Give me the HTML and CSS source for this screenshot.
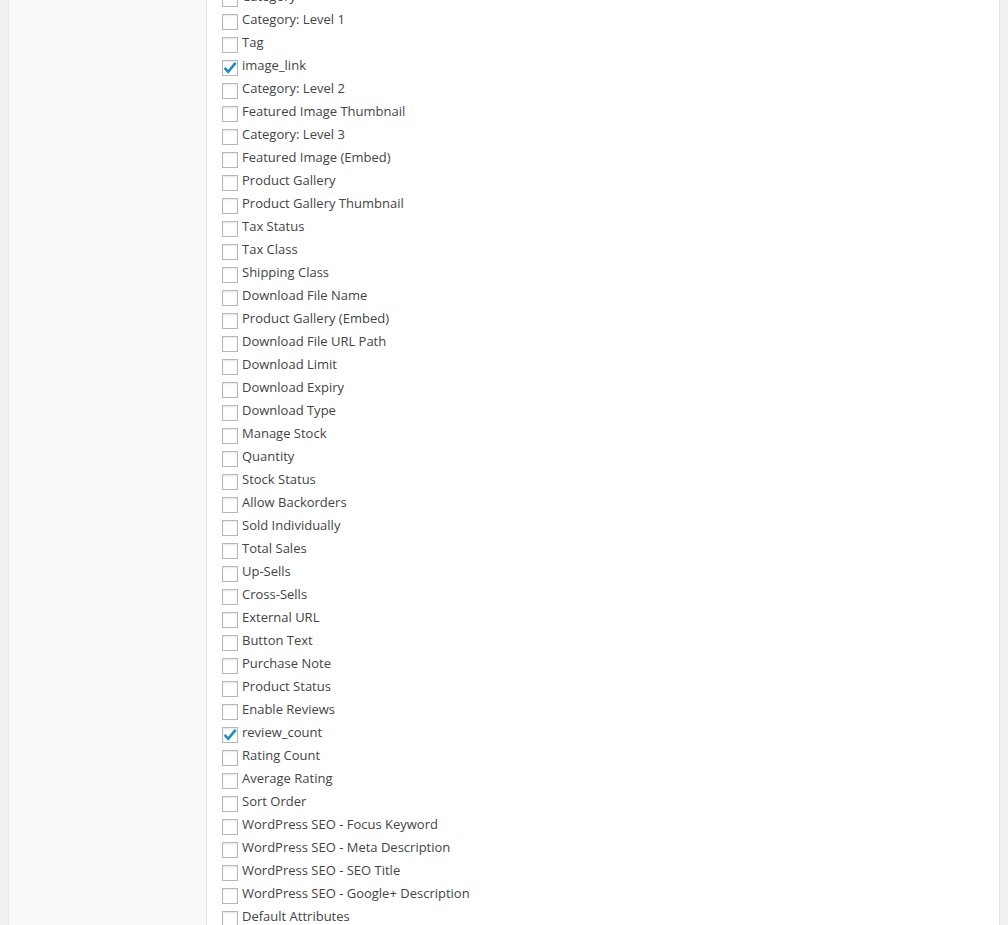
FILE: index.html
```html
<!DOCTYPE html>
<html lang="en">
<head>
    <meta charset="UTF-8">
    <title>Export Fields</title>
    <link rel="stylesheet" href="styles.css">
</head>
<body>
    <div class="wrap">
        <div class="sidebar"></div>
        <div class="main">
            <ul class="fields">
                <li><span class="box"></span>Category</li>
                <li><span class="box"></span>Category: Level 1</li>
                <li><span class="box"></span>Tag</li>
                <li><span class="box checked"><svg viewBox="0 0 14 14"><path d="M1.6 6.8 L5.2 10.8 L12.6 1.8"/></svg></span>image_link</li>
                <li><span class="box"></span>Category: Level 2</li>
                <li><span class="box"></span>Featured Image Thumbnail</li>
                <li><span class="box"></span>Category: Level 3</li>
                <li><span class="box"></span>Featured Image (Embed)</li>
                <li><span class="box"></span>Product Gallery</li>
                <li><span class="box"></span>Product Gallery Thumbnail</li>
                <li><span class="box"></span>Tax Status</li>
                <li><span class="box"></span>Tax Class</li>
                <li><span class="box"></span>Shipping Class</li>
                <li><span class="box"></span>Download File Name</li>
                <li><span class="box"></span>Product Gallery (Embed)</li>
                <li><span class="box"></span>Download File URL Path</li>
                <li><span class="box"></span>Download Limit</li>
                <li><span class="box"></span>Download Expiry</li>
                <li><span class="box"></span>Download Type</li>
                <li><span class="box"></span>Manage Stock</li>
                <li><span class="box"></span>Quantity</li>
                <li><span class="box"></span>Stock Status</li>
                <li><span class="box"></span>Allow Backorders</li>
                <li><span class="box"></span>Sold Individually</li>
                <li><span class="box"></span>Total Sales</li>
                <li><span class="box"></span>Up-Sells</li>
                <li><span class="box"></span>Cross-Sells</li>
                <li><span class="box"></span>External URL</li>
                <li><span class="box"></span>Button Text</li>
                <li><span class="box"></span>Purchase Note</li>
                <li><span class="box"></span>Product Status</li>
                <li><span class="box"></span>Enable Reviews</li>
                <li><span class="box checked"><svg viewBox="0 0 14 14"><path d="M1.6 6.8 L5.2 10.8 L12.6 1.8"/></svg></span>review_count</li>
                <li><span class="box"></span>Rating Count</li>
                <li><span class="box"></span>Average Rating</li>
                <li><span class="box"></span>Sort Order</li>
                <li><span class="box"></span>WordPress SEO - Focus Keyword</li>
                <li><span class="box"></span>WordPress SEO - Meta Description</li>
                <li><span class="box"></span>WordPress SEO - SEO Title</li>
                <li><span class="box"></span>WordPress SEO - Google+ Description</li>
                <li><span class="box"></span>Default Attributes</li>
                <li><span class="box"></span>Attributes</li>
            </ul>
        </div>
    </div>
</body>
</html>
```

FILE: styles.css
```css
* {
    margin: 0;
    padding: 0;
    box-sizing: border-box;
}

html, body {
    height: 100%;
    overflow: hidden;
}

body {
    background: #f1f1f1;
    font-family: 'Open Sans', sans-serif;
    font-size: 13px;
    color: #444;
    padding: 0 8px;
}

.wrap {
    display: flex;
    height: 100%;
    border-left: 1px solid #e5e5e5;
    border-right: 1px solid #e5e5e5;
}

.sidebar {
    width: 198px;
    flex-shrink: 0;
    background: #f9f9f9;
    border-right: 1px solid #e5e5e5;
}

.main {
    flex: 1;
    background: #fff;
    padding-left: 15px;
    overflow: hidden;
}

.fields {
    list-style: none;
    margin-top: -16px;
}

.fields li {
    display: flex;
    align-items: center;
    height: 23px;
}

.box {
    width: 16px;
    height: 16px;
    margin: 7px 4px 0 0;
    border: 1px solid #b4b9be;
    background: #fff;
    box-shadow: inset 0 1px 2px rgba(0, 0, 0, 0.1);
    flex-shrink: 0;
}

.box svg {
    display: block;
    width: 14px;
    height: 14px;
    fill: none;
    stroke: #1e8cbe;
    stroke-width: 2.6;
}
```
